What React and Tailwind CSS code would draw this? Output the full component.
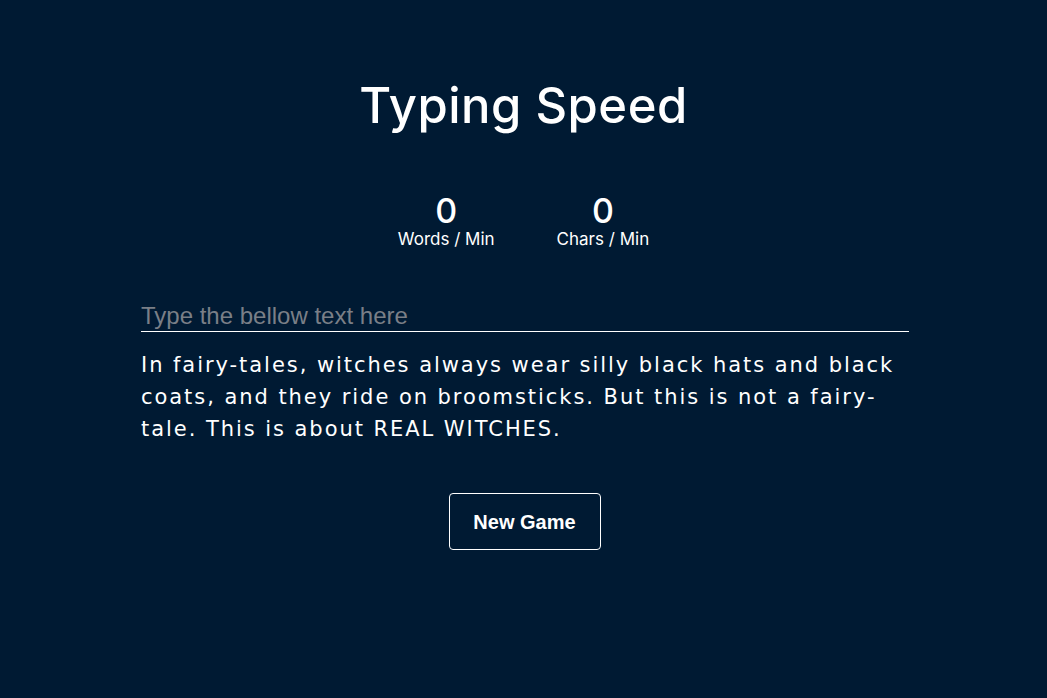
export default function App() {
  return (
    <div className="min-h-[698px] w-full bg-[#001a33] text-white" style={{ fontFamily: "Inter, 'Open Sans', sans-serif" }}>
      <div className="flex flex-col items-center pt-[74px]">
        <h1 className="text-[49px] leading-[64px] font-medium tracking-[0.5px]">Typing Speed</h1>
        <div className="mt-[56px] flex gap-[62px]">
          <div className="flex flex-col items-center">
            <span className="text-[34px] leading-[34px] font-medium">0</span>
            <span className="text-[17px] leading-[22px]">Words / Min</span>
          </div>
          <div className="flex flex-col items-center">
            <span className="text-[34px] leading-[34px] font-medium">0</span>
            <span className="text-[17px] leading-[22px]">Chars / Min</span>
          </div>
        </div>
        <div className="mt-[53px] w-[768px] ml-[3px]">
          <input
            type="text"
            placeholder="Type the bellow text here"
            className="block w-full bg-transparent border-b border-white pb-[2px] text-[24px] leading-[26px] text-white placeholder:text-[#7a7f87] outline-none"
            style={{ fontFamily: "'Liberation Sans', Arial, sans-serif" }}
          />
          <p
            className="mt-[17px] text-[21px] leading-[32px] tracking-[1.95px]"
            style={{ fontFamily: "'DejaVu Sans', Inter, sans-serif" }}
          >
            In fairy-tales, witches always wear silly black hats and black coats, and they ride on broomsticks. But this is not a fairy-tale. This is about REAL WITCHES.
          </p>
        </div>
        <button
          className="mt-[48px] ml-[2px] w-[152px] h-[57px] border border-white rounded-[4px] text-[20px] font-bold"
          style={{ fontFamily: "'Liberation Sans', Arial, sans-serif" }}
        >
          New Game
        </button>
      </div>
    </div>
  );
}
